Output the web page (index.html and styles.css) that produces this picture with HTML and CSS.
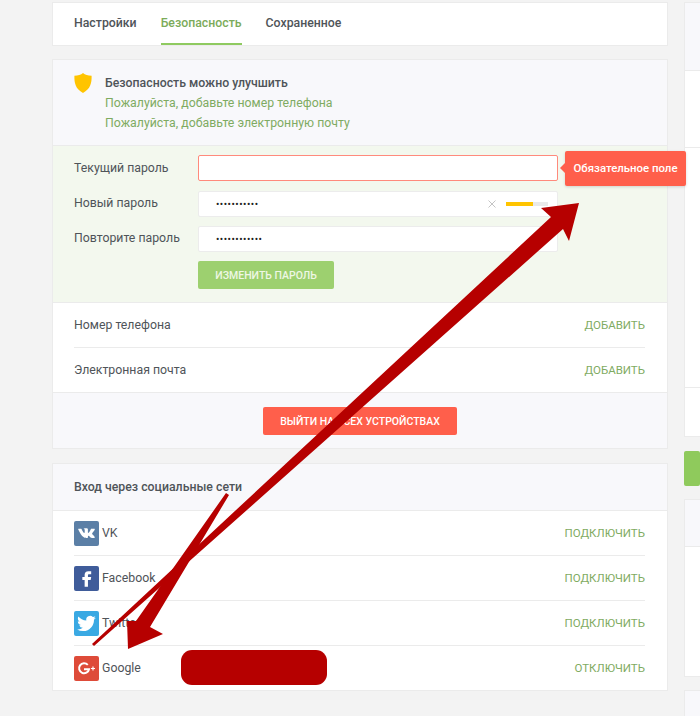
FILE: index.html
```html
<!DOCTYPE html>
<html lang="ru">
<head>
<meta charset="utf-8">
<title>Безопасность</title>
<link rel="stylesheet" href="styles.css">
</head>
<body>
<div class="page">
  <main class="main">
    <nav class="card tabs">
      <a class="tab">Настройки</a>
      <a class="tab tab-active">Безопасность</a>
      <a class="tab">Сохраненное</a>
    </nav>

    <section class="card">
      <div class="notice">
        <svg class="shield" viewBox="0 0 18 20"><path d="M9 0C7 1.700 4 2.700.4 2.800.2 10 1.500 16 9 20c7.500-4 8.800-10 8.600-17.200C14 2.700 11 1.700 9 0z" fill="#ffc400"/></svg>
        <div class="notice-text">
          <div class="notice-title">Безопасность можно улучшить</div>
          <div class="notice-link">Пожалуйста, добавьте номер телефона</div>
          <div class="notice-link">Пожалуйста, добавьте электронную почту</div>
        </div>
      </div>
      <div class="form">
        <div class="form-row">
          <label class="form-label">Текущий пароль</label>
          <div class="field field-error"></div>
          <div class="tooltip">Обязательное поле</div>
        </div>
        <div class="form-row">
          <label class="form-label">Новый пароль</label>
          <div class="field"><span class="dots">•••••••••••</span>
            <svg class="clear" viewBox="0 0 8 8"><path d="M.5.500l7 7M7.500.500l-7 7" stroke="#c4c4c4" stroke-width="1" fill="none"/></svg>
            <span class="strength"><span class="strength-fill"></span></span>
          </div>
        </div>
        <div class="form-row">
          <label class="form-label">Повторите пароль</label>
          <div class="field"><span class="dots">••••••••••••</span></div>
        </div>
        <div class="form-row form-actions">
          <button class="btn btn-green">ИЗМЕНИТЬ ПАРОЛЬ</button>
        </div>
      </div>
      <div class="rows">
        <div class="row"><span class="row-name">Номер телефона</span><a class="action">ДОБАВИТЬ</a></div>
        <div class="row"><span class="row-name">Электронная почта</span><a class="action">ДОБАВИТЬ</a></div>
      </div>
      <div class="card-footer">
        <button class="btn btn-red">ВЫЙТИ НА ВСЕХ УСТРОЙСТВАХ</button>
      </div>
    </section>

    <section class="card">
      <h2 class="card-head">Вход через социальные сети</h2>
      <div class="rows">
        <div class="row row-social">
          <span class="social">
            <svg class="social-icon icon-vk" viewBox="0 0 24 24"><path fill="#fff" d="M12.785 16.241s.288-.032.436-.194c.136-.148.132-.427.132-.427s-.02-1.304.576-1.496c.588-.19 1.341 1.26 2.14 1.818.605.422 1.064.33 1.064.33l2.137-.03s1.117-.071.587-.964c-.043-.073-.308-.661-1.588-1.87-1.34-1.264-1.16-1.059.453-3.246.983-1.332 1.376-2.145 1.253-2.493-.117-.332-.84-.244-.84-.244l-2.406.015s-.178-.025-.31.056c-.13.079-.212.262-.212.262s-.382 1.03-.89 1.907c-1.07 1.85-1.499 1.948-1.674 1.832-.407-.267-.305-1.075-.305-1.648 0-1.793.267-2.54-.521-2.733-.262-.065-.454-.107-1.123-.114-.858-.009-1.585.003-1.996.208-.274.136-.485.44-.356.457.159.022.519.099.71.363.246.341.237 1.107.237 1.107s.142 2.11-.33 2.371c-.325.18-.77-.187-1.725-1.865-.489-.859-.859-1.81-.859-1.81s-.07-.176-.198-.272c-.154-.115-.37-.151-.37-.151l-2.286.015s-.343.01-.469.161C3.940 7.721 4.043 8 4.043 8s1.790 4.258 3.817 6.403c1.858 1.967 3.968 1.838 3.968 1.838h.957z"/></svg>
            VK
          </span>
          <a class="action">ПОДКЛЮЧИТЬ</a>
        </div>
        <div class="row row-social">
          <span class="social">
            <svg class="social-icon icon-fb" viewBox="0 0 24 24"><path fill="#fff" d="M14.500 8H16.500V5h-2.600C11.300 5 10.200 6.600 10.200 8.600V10.500H8v3h2.200V20h3.200v-6.500h2.600l.5-3h-3.100V8.900c0-.6.300-.9 1.100-.9z"/></svg>
            Facebook
          </span>
          <a class="action">ПОДКЛЮЧИТЬ</a>
        </div>
        <div class="row row-social">
          <span class="social">
            <svg class="social-icon icon-tw" viewBox="-4 -4 32 32"><path fill="#fff" d="M23.953 4.570a10 10 0 01-2.825.775 4.958 4.958 0 002.163-2.723c-.951.555-2.005.959-3.127 1.184a4.920 4.920 0 00-8.384 4.482C7.690 8.095 4.067 6.130 1.640 3.162a4.822 4.822 0 00-.666 2.475c0 1.710.870 3.213 2.188 4.096a4.904 4.904 0 01-2.228-.616v.060a4.923 4.923 0 003.946 4.827 4.996 4.996 0 01-2.212.085 4.936 4.936 0 004.604 3.417 9.867 9.867 0 01-6.102 2.105c-.390 0-.779-.023-1.170-.067a13.995 13.995 0 007.557 2.209c9.053 0 13.998-7.496 13.998-13.985 0-.210 0-.420-.015-.630A9.935 9.935 0 0024 4.590z"/></svg>
            Twitter
          </span>
          <a class="action">ПОДКЛЮЧИТЬ</a>
        </div>
        <div class="row row-social">
          <span class="social">
            <svg class="social-icon icon-gp" viewBox="0 0 25 25"><path fill="none" stroke="#fff" stroke-width="2" d="M13.800 8.900A5 5 0 1 0 15 13.200H10"/><path fill="none" stroke="#fff" stroke-width="1.200" d="M17 12.500h4M19 10.500v4"/></svg>
            Google
          </span>
          <a class="action">ОТКЛЮЧИТЬ</a>
        </div>
      </div>
    </section>
  </main>

  <aside class="side">
    <div class="card side-card">
      <div class="side-head side-head-a"></div>
      <div class="side-body side-body-a"></div>
      <div class="side-body side-body-b"></div>
      <div class="side-body side-body-c"></div>
    </div>
    <div class="side-btn"></div>
    <div class="card side-card">
      <div class="side-head side-head-b"></div>
      <div class="side-body side-body-d"></div>
    </div>
    <div class="card side-card side-last"></div>
  </aside>
</div>

<svg class="overlay" viewBox="0 0 700 716">
  <path fill="#b60000" d="M579 203L541 208 551 217 92 644 94 646 563 229 569 241z"/>
  <path fill="#b60000" d="M226 493L136 621 127 621 128 649 163 634 150 627 229 495z"/>
</svg>
<div class="redact"></div>
</body>
</html>
```
FILE: styles.css
```css
* { box-sizing: border-box; }
html, body { margin: 0; height: 716px; overflow: hidden; }
body {
  background: #f3f3f3;
  font-family: Roboto, "Liberation Sans", sans-serif;
  font-size: 12.3px;
  color: #4f5459;
  position: relative;
}
.page {
  display: flex;
  align-items: flex-start;
  gap: 18px;
  padding: 3px 0 0 53px;
  width: 700px;
  height: 716px;
  overflow: hidden;
}
.main {
  width: 614px;
  flex: none;
  display: flex;
  flex-direction: column;
  gap: 15px;
}
.main > .card:last-child { margin-top: 1px; }
.card {
  background: #fff;
  box-shadow: 0 0 0 1px #ebebeb;
}
.tabs {
  display: flex;
  gap: 24px;
  height: 42px;
  padding-left: 21px;
}
.tab {
  line-height: 41px;
  height: 42px;
  font-weight: 500;
}
.tab-active {
  color: #7cab5a;
  border-bottom: 2px solid #8fca60;
}
.notice {
  display: flex;
  gap: 13px;
  background: #f8f8fb;
  height: 86px;
  padding: 13px 21px 0;
  border-bottom: 1px solid #ebebeb;
}
.shield { width: 18px; height: 20px; flex: none; }
.notice-title { font-weight: 500; line-height: 20px; }
.notice-link { color: #7fab62; line-height: 20px; }
.form {
  background: #f3f8ee;
  padding: 9px 110px 13px 21px;
  height: 157px;
  border-bottom: 1px solid #ebebeb;
}
.form-row {
  display: flex;
  align-items: center;
  position: relative;
  margin-bottom: 9px;
  height: 26px;
}
.form-row:first-child { margin-bottom: 10px; }
.form-actions { height: 28px; margin: 0; padding-left: 124px; }
.form-label { width: 124px; flex: none; position: relative; top: -1px; }
.form-row:first-child .form-label { top: 0; }
.field {
  width: 360px;
  height: 26px;
  flex: none;
  background: #fff;
  border: 1px solid #ececec;
  border-radius: 2px;
  display: flex;
  align-items: center;
  padding: 0 9px 0 17px;
  color: #222;
}
.field-error { border-color: #ff8a7c; }
.dots { font-size: 10px; letter-spacing: .5px; flex: 1; }
.clear { width: 8px; height: 8px; margin-right: 10px; }
.strength { width: 42px; height: 4px; background: #e9e9e9; display: block; }
.strength-fill { display: block; width: 27px; height: 4px; background: #ffc400; }
.tooltip {
  position: absolute;
  left: 491px;
  top: -4px;
  width: 121px;
  height: 35px;
  background: #ff5f4b;
  color: #fff;
  font-size: 11.4px;
  font-weight: 500;
  line-height: 34px;
  text-align: center;
  border-radius: 2px;
  box-shadow: 0 1px 3px rgba(0,0,0,.15);
  z-index: 2;
}
.tooltip::before {
  content: "";
  position: absolute;
  left: -5px;
  top: 12px;
  border-style: solid;
  border-width: 5px 5px 5px 0;
  border-color: transparent #ff5f4b transparent transparent;
}
.btn {
  border: 0;
  border-radius: 2px;
  color: #fff;
  font-family: inherit;
  font-size: 10.5px;
  font-weight: 500;
  height: 28px;
  padding: 0;
}
.btn-green {
  background: #9dd06f;
  width: 136px;
  color: #eef7e4;
}
.btn-red {
  background: #ff5f4b;
  width: 194px;
}
.rows { padding: 0 22px 0 21px; background: #fff; }
.row {
  display: flex;
  align-items: center;
  justify-content: space-between;
  height: 45px;
  border-bottom: 1px solid #ebebeb;
}
.row:last-child { border-bottom: 0; height: 44px; }
.action { color: #7fab62; font-size: 11.5px; }
.card-footer {
  background: #f8f8fb;
  height: 56px;
  border-top: 1px solid #ebebeb;
  padding-top: 1px;
  display: flex;
  align-items: center;
  justify-content: center;
}
.card-head {
  margin: 0;
  background: #f8f8fb;
  height: 47px;
  padding-left: 21px;
  font-size: 12.3px;
  font-weight: 500;
  line-height: 46px;
  color: #4f5459;
  border-bottom: 1px solid #ebebeb;
}
.social { display: flex; align-items: center; gap: 3px; }
.social-icon { width: 25px; height: 25px; border-radius: 2px; flex: none; }
.icon-vk { background: #5b7fa6; }
.icon-fb { background: #3f5c9a; }
.icon-tw { background: #3aa9e3; }
.icon-gp { background: #de4b39; }
.side { flex: 1; min-width: 0; display: flex; flex-direction: column; }
.side-card { margin-bottom: 15px; }
.side-head-a { height: 68px; background: #f8f8fb; border-bottom: 1px solid #ebebeb; }
.side-body-a { height: 77px; border-bottom: 1px solid #ebebeb; }
.side-body-b { height: 240px; border-bottom: 1px solid #ebebeb; }
.side-body-c { height: 48px; }
.side-btn { height: 35px; background: #8fca5c; border-radius: 2px; margin: 0 0 14px -1px; }
.side-head-b { height: 47px; background: #f8f8fb; border-bottom: 1px solid #ebebeb; }
.side-body-d { height: 129px; }
.side-last { height: 25px; background: #f8f8fb; }
.overlay {
  position: absolute;
  left: 0;
  top: 0;
  width: 700px;
  height: 716px;
  z-index: 3;
  pointer-events: none;
}
.redact {
  position: absolute;
  left: 181px;
  top: 650px;
  width: 146px;
  height: 35px;
  background: #b60000;
  border-radius: 11px;
  z-index: 3;
}
```
